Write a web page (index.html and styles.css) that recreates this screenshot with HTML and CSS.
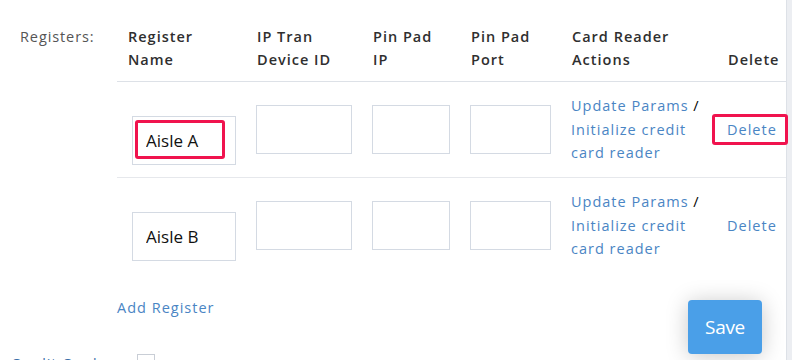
FILE: index.html
```html
<!DOCTYPE html>
<html lang="en">
<head>
    <meta charset="UTF-8">
    <meta name="viewport" content="width=device-width, initial-scale=1.0">
    <title>Registers</title>
    <link rel="stylesheet" href="styles.css">
</head>
<body>

    <div class="page">
        <div class="form-row">
            <div class="form-label">Registers:</div>
            <table class="registers">
                <thead>
                    <tr>
                        <th class="col-name">Register<br>Name</th>
                        <th class="col-ip">IP Tran<br>Device ID</th>
                        <th class="col-pin">Pin Pad<br>IP</th>
                        <th class="col-port">Pin Pad<br>Port</th>
                        <th class="col-actions">Card Reader<br>Actions</th>
                        <th class="col-delete">Delete</th>
                    </tr>
                </thead>
                <tbody>
                    <tr>
                        <td><span class="name-box highlight"><input class="input name-input" type="text" value="Aisle A"></span></td>
                        <td><input class="input ip-input" type="text"></td>
                        <td><input class="input pin-input" type="text"></td>
                        <td><input class="input port-input" type="text"></td>
                        <td><a href="#">Update Params</a> /<br><a href="#">Initialize credit<br>card reader</a></td>
                        <td><a href="#" class="delete-link boxed">Delete</a></td>
                    </tr>
                    <tr>
                        <td><span class="name-box"><input class="input name-input" type="text" value="Aisle B"></span></td>
                        <td><input class="input ip-input" type="text"></td>
                        <td><input class="input pin-input" type="text"></td>
                        <td><input class="input port-input" type="text"></td>
                        <td><a href="#">Update Params</a> /<br><a href="#">Initialize credit<br>card reader</a></td>
                        <td><a href="#" class="delete-link">Delete</a></td>
                    </tr>
                </tbody>
            </table>
        </div>

        <div class="add-row">
            <a href="#">Add Register</a>
        </div>

        <div class="form-row swipe-row">
            <div class="form-label swipe-label">Credit Card Swipe:</div>
            <input type="checkbox" class="check">
        </div>

        <button class="save">Save</button>
    </div>

</body>
</html>
```

FILE: styles.css
```css
body {
    margin: 0;
    background-color: #eceef2;
    font-family: "Open Sans", "Liberation Sans", sans-serif;
    height: 360px;
    overflow: hidden;
}

.page {
    position: relative;
    width: 786px;
    height: 360px;
    background-color: #fff;
    border-right: 1px solid #dde1e7;
}

a {
    color: #4a85c4;
    text-decoration: none;
}

.form-row {
    display: flex;
}

.form-label {
    flex-shrink: 0;
    width: 97px;
    padding: 27px 0 0 20px;
    font-size: 14.5px;
    letter-spacing: 0.9px;
    color: #555;
}

.registers {
    flex-shrink: 0;
    width: 669px;
    table-layout: fixed;
    border-collapse: collapse;
    margin-top: 25px;
    font-size: 14.5px;
    letter-spacing: 1px;
}

.registers th {
    text-align: left;
    vertical-align: bottom;
    font-weight: 600;
    color: #2f2f2f;
    line-height: 23px;
    padding: 0 10px 10px 11px;
    border-bottom: 1px solid #dde1e7;
}

.registers td {
    vertical-align: middle;
    padding: 12px 10px 12px 10px;
    line-height: 23.5px;
    border-bottom: 1px solid #e6e8ec;
}

.registers tbody tr:last-child td {
    border-bottom: none;
}

.col-name { width: 108px; }
.col-ip { width: 95px; }
.col-pin { width: 77px; }
.col-port { width: 80px; }
.col-actions { width: 135px; }
.col-delete { width: 48px; }

.input {
    display: block;
    box-sizing: border-box;
    height: 49px;
    border: 1px solid #d4dae3;
    border-radius: 0;
    font-family: "Open Sans", "Liberation Sans", sans-serif;
    font-size: 17px;
    color: #111;
    padding: 0 13px;
    margin: 0;
}

.name-box {
    position: relative;
    display: block;
    width: 104px;
    margin: 22px 0 0 5px;
}

.name-input {
    width: 104px;
}

.ip-input { width: 96px; }
.pin-input { width: 78px; }
.port-input { width: 81px; }

.highlight::after {
    content: "";
    position: absolute;
    left: 3px;
    top: 4px;
    width: 90px;
    height: 39px;
    box-sizing: border-box;
    border: 3px solid #f0134e;
    border-radius: 3px;
}

.delete-link {
    display: inline-block;
}

.boxed {
    position: relative;
}

.boxed::after {
    content: "";
    position: absolute;
    left: -15px;
    right: -11px;
    top: -4px;
    bottom: -4px;
    border: 3px solid #f0134e;
    border-radius: 3px;
}

.add-row {
    padding: 25px 0 0 117px;
    font-size: 14.5px;
    letter-spacing: 1px;
}

.swipe-row {
    margin-top: 37px;
}

.swipe-label {
    width: 116px;
    padding: 0 0 0 11px;
    color: #3a6ea8;
}

.check {
    width: 18px;
    height: 18px;
    margin: 0 0 0 10px;
    -webkit-appearance: none;
    appearance: none;
    border: 1px solid #c9ced6;
    background: #fff;
}

.save {
    position: absolute;
    left: 688px;
    top: 300px;
    width: 74px;
    height: 54px;
    border: none;
    border-radius: 4px;
    background-color: #4a9fe8;
    color: #fff;
    font-family: "Open Sans", "Liberation Sans", sans-serif;
    font-size: 19px;
    font-weight: 500;
    letter-spacing: -0.3px;
    box-shadow: 0 2px 22px rgba(0, 0, 0, 0.22);
    cursor: pointer;
}
```
